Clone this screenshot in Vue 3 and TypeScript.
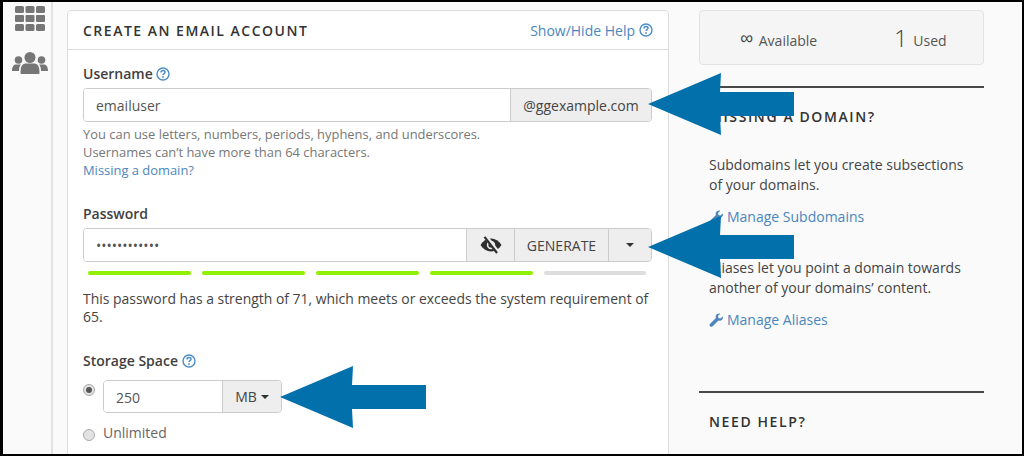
<script setup lang="ts">
const bars = ['on', 'on', 'on', 'on', 'off']
</script>

<template>
  <div class="frame">
    <aside class="rail">
      <svg class="grid-ico" width="30" height="26" viewBox="0 0 30 26" fill="#767676">
        <rect x="0" y="0" width="9" height="7" rx="1.5" /><rect x="10.5" y="0" width="9" height="7" rx="1.5" /><rect x="21" y="0" width="9" height="7" rx="1.5" />
        <rect x="0" y="9" width="9" height="7" rx="1" /><rect x="10.5" y="9" width="9" height="7" rx="1" /><rect x="21" y="9" width="9" height="7" rx="1" />
        <rect x="0" y="18" width="9" height="7" rx="1.5" /><rect x="10.5" y="18" width="9" height="7" rx="1.5" /><rect x="21" y="18" width="9" height="7" rx="1.5" />
      </svg>
      <svg class="people-ico" width="36" height="22" viewBox="0 0 36 22" fill="#767676">
        <circle cx="18" cy="5.5" r="5.5" />
        <circle cx="6.5" cy="8" r="3.8" />
        <circle cx="29.5" cy="8" r="3.8" />
        <path d="M0 19c0-4 1.500-6.500 4-6.500h5c-1.500 1.500-2 3.500-2 6.500z" />
        <path d="M36 19c0-4-1.500-6.500-4-6.500h-5c1.500 1.500 2 3.500 2 6.500z" />
        <path d="M8.500 21c0-6 1.500-9.500 5-9.500h9c3.500 0 5 3.500 5 9.500 0 .6-.5 1-1 1h-17c-.5 0-1-.4-1-1z" />
      </svg>
    </aside>

    <main class="content">
      <section class="card">
        <header class="card-head">
          <h2>CREATE AN EMAIL ACCOUNT</h2>
          <a class="link help-toggle">Show/Hide Help
            <svg class="q" viewBox="0 0 14 14" width="14" height="14"><circle cx="7" cy="7" r="6" fill="none" stroke="#4b8cc8" stroke-width="1.400" /><path d="M5 5.400c0-1.200.9-1.900 2-1.900s2 .7 2 1.700c0 1.500-2 1.500-2 2.900" fill="none" stroke="#4b8cc8" stroke-width="1.500" /><rect x="6.200" y="9.200" width="1.600" height="1.600" fill="#4b8cc8" /></svg>
          </a>
        </header>
        <div class="card-body">
          <div class="label">Username
            <svg class="q" viewBox="0 0 14 14" width="14" height="14"><circle cx="7" cy="7" r="6" fill="none" stroke="#4b8cc8" stroke-width="1.400" /><path d="M5 5.400c0-1.200.9-1.900 2-1.900s2 .7 2 1.700c0 1.500-2 1.500-2 2.900" fill="none" stroke="#4b8cc8" stroke-width="1.500" /><rect x="6.200" y="9.200" width="1.600" height="1.600" fill="#4b8cc8" /></svg>
          </div>
          <div class="input-group">
            <div class="field">emailuser</div>
            <div class="addon domain">@ggexample.com</div>
          </div>
          <p class="hint">You can use letters, numbers, periods, hyphens, and underscores.</p>
          <p class="hint">Usernames can’t have more than 64 characters.</p>
          <p class="hint"><a class="link">Missing a domain?</a></p>

          <div class="label pw-label">Password</div>
          <div class="input-group">
            <div class="field dots">••••••••••••</div>
            <div class="addon eye">
              <svg width="22" height="18" viewBox="0 0 22 18">
                <path d="M.5 9C3 4.800 6.800 2.600 11 2.600S19 4.800 21.500 9C19 13.200 15.200 15.400 11 15.400S3 13.200.5 9z" fill="#2e2e2e" />
                <circle cx="11" cy="9" r="4.200" fill="#eee" />
                <circle cx="11" cy="9" r="2.600" fill="#2e2e2e" />
                <path d="M5.800.5 18 16.500" stroke="#eee" stroke-width="4" />
                <path d="M4.500.8 17 17" stroke="#2e2e2e" stroke-width="2.200" />
              </svg>
            </div>
            <div class="addon gen">GENERATE</div>
            <div class="addon caret-cell"><span class="caret"></span></div>
          </div>
          <div class="strength">
            <span v-for="(b, i) in bars" :key="i" class="bar" :class="b"></span>
          </div>
          <p class="strength-text">This password has a strength of 71, which meets or exceeds the system requirement of 65.</p>

          <div class="label storage-label">Storage Space
            <svg class="q" viewBox="0 0 14 14" width="14" height="14"><circle cx="7" cy="7" r="6" fill="none" stroke="#4b8cc8" stroke-width="1.400" /><path d="M5 5.400c0-1.200.9-1.900 2-1.900s2 .7 2 1.700c0 1.500-2 1.500-2 2.900" fill="none" stroke="#4b8cc8" stroke-width="1.500" /><rect x="6.200" y="9.200" width="1.600" height="1.600" fill="#4b8cc8" /></svg>
          </div>
          <div class="radio-row storage-row">
            <span class="radio checked"></span>
            <div class="input-group small">
              <div class="field">250</div>
              <div class="addon mb">MB <span class="caret"></span></div>
            </div>
          </div>
          <div class="radio-row unlimited">
            <span class="radio"></span>
            <span class="unlimited-text">Unlimited</span>
          </div>
        </div>
      </section>

      <aside class="side">
        <div class="stats">
          <div class="stat inf"><span class="big inf-glyph">∞</span> Available</div>
          <div class="stat used"><span class="big">1</span> Used</div>
        </div>

        <div class="side-block first">
          <h3>MISSING A DOMAIN?</h3>
          <p>Subdomains let you create subsections of your domains.</p>
          <a class="link tool first-tool">
            <svg class="wrench" viewBox="0 0 14 14" width="14" height="14"><path fill="#4b86bd" d="M13.800 3.400c.3.900.2 2-.4 2.900-.9 1.300-2.500 1.800-3.900 1.300l-5.900 5.700c-.7.700-1.800.7-2.500 0s-.7-1.800 0-2.500l5.800-5.800c-.5-1.400 0-3 1.300-3.900.9-.6 2-.8 3-.4L9 3.100l.4 2 2 .4z" /></svg>
            Manage Subdomains
          </a>
          <p class="aliases">Aliases let you point a domain towards another of your domains’ content.</p>
          <a class="link tool second-tool">
            <svg class="wrench" viewBox="0 0 14 14" width="14" height="14"><path fill="#4b86bd" d="M13.800 3.400c.3.900.2 2-.4 2.900-.9 1.300-2.500 1.800-3.900 1.300l-5.900 5.700c-.7.700-1.800.7-2.500 0s-.7-1.800 0-2.500l5.800-5.800c-.5-1.400 0-3 1.300-3.900.9-.6 2-.8 3-.4L9 3.100l.4 2 2 .4z" /></svg>
            Manage Aliases
          </a>
        </div>

        <div class="side-block second">
          <h3>NEED HELP?</h3>
        </div>
      </aside>
    </main>

    <svg class="arrow a1" width="146" height="63" viewBox="0 0 146 63"><path d="M0 31 73 0 72 19H146V43H72L73 62z" fill="#0270ab" /></svg>
    <svg class="arrow a2" width="146" height="63" viewBox="0 0 146 63"><path d="M0 31 73 0 72 19H146V43H72L73 62z" fill="#0270ab" /></svg>
    <svg class="arrow a3" width="146" height="63" viewBox="0 0 146 63"><path d="M0 31 73 0 72 19H146V43H72L73 62z" fill="#0270ab" /></svg>
  </div>
</template>

<style>
html, body { margin: 0; padding: 0; background: #000; }
</style>

<style scoped>
.frame {
  position: relative;
  box-sizing: border-box;
  width: 1024px;
  height: 456px;
  overflow: hidden;
  display: flex;
  border-style: solid;
  border-color: #000;
  border-width: 2px 2px 2px 3px;
  background: #fafafa;
  font-family: "Open Sans", "Liberation Sans", sans-serif;
  font-size: 14px;
  color: #444;
}
.rail {
  box-sizing: border-box;
  width: 50px;
  flex: none;
  display: flex;
  flex-direction: column;
  border-right: 2px solid #e2e2e2;
  background: #fafafa;
}
.grid-ico { display: block; margin: 4px 0 0 12px; }
.people-ico { display: block; margin: 20px 0 0 9px; }
.content { display: flex; align-items: flex-start; padding-top: 8px; }
.card {
  box-sizing: border-box;
  width: 602px;
  height: 460px;
  margin-left: 14px;
  flex: none;
  background: #fff;
  border: 1px solid #ddd;
  border-radius: 4px;
}
.card-head {
  box-sizing: border-box;
  height: 39px;
  padding: 0 15px;
  display: flex;
  align-items: center;
  justify-content: space-between;
  border-bottom: 1px solid #ddd;
}
h2 {
  margin: 0;
  font-size: 14px;
  font-weight: 600;
  letter-spacing: 1.5px;
  color: #333;
}
.link { color: #4b86bd; }
.help-toggle { font-size: 14px; display: flex; align-items: center; gap: 4px; }
.q { vertical-align: -2px; }
.card-body { padding: 14px 15px 0; }
.label { font-weight: 600; line-height: 20px; color: #3f3f3f; }
.input-group {
  box-sizing: border-box;
  display: flex;
  height: 34px;
  width: 569px;
  margin-top: 4px;
  border: 1px solid #ccc;
  border-radius: 4px;
  overflow: hidden;
}
.field {
  flex: 1;
  min-width: 0;
  padding: 0 12px;
  line-height: 34px;
  color: #555;
  background: #fff;
}
.addon {
  box-sizing: border-box;
  flex: none;
  display: flex;
  align-items: center;
  justify-content: center;
  background: #eee;
  border-left: 1px solid #ccc;
  color: #444;
}
.domain { width: 141px; font-size: 14px; }
.eye { width: 48px; }
.gen { width: 94px; }
.caret-cell { width: 43px; }
.caret {
  display: inline-block;
  width: 0;
  height: 0;
  border-left: 4px solid transparent;
  border-right: 4px solid transparent;
  border-top: 4px solid #333;
}
.hint { margin: 0; font-size: 12.93px; line-height: 18px; color: #777; }
.input-group + .hint { margin-top: 3px; }
.pw-label { margin-top: 25px; }
.strength { display: flex; gap: 11px; margin: 9px 0 0 5px; width: 559px; }
.bar { width: 103px; height: 4px; border-radius: 2px; }
.bar.on { background: #90f000; }
.bar.off { background: #ddd; width: 102px; }
.strength-text { margin: 15px 0 0; width: 572px; line-height: 18px; color: #444; font-size: 13.95px; }
.storage-label { margin-top: 25px; }
.radio-row { display: flex; align-items: flex-start; margin-top: 4px; }
.storage-row { margin-top: 9px; }
.radio {
  box-sizing: border-box;
  width: 12px;
  height: 12px;
  flex: none;
  margin-top: 4px;
  border-radius: 50%;
  background: #e3e3e3;
  border: 1px solid #aaa;
  position: relative;
}
.radio.checked::after {
  content: "";
  display: block;
  width: 6px;
  height: 6px;
  margin: 2px;
  border-radius: 50%;
  background: #555;
}
.small { width: 179px; margin-top: 0; margin-left: 8px; height: 33px; }
.mb { width: 59px; gap: 4px; }
.unlimited { margin-top: 10px; align-items: center; }
.unlimited .radio { margin-top: 4px; }
.unlimited-text { margin-left: 8px; color: #666; line-height: 20px; }
.side { width: 285px; margin-left: 30px; flex: none; }
.stats {
  box-sizing: border-box;
  height: 55px;
  display: flex;
  gap: 16px;
  background: #f5f5f5;
  border: 1px solid #e3e3e3;
  border-radius: 4px;
  align-items: center;
  padding: 4px 0 0 16px;
}
.stat { flex: 1; text-align: center; line-height: 36px; white-space: nowrap; color: #555; }
.big { font-size: 24px; font-weight: 300; color: #444; vertical-align: -1px; margin-right: 2px; }
.inf-glyph { font-size: 18px; font-family: "DejaVu Sans", sans-serif; vertical-align: 2px; }
.side-block { margin-top: 21px; border-top: 2px solid #484848; padding: 0 10px; }
h3 { margin: 19px 0 0; font-size: 14px; font-weight: 600; letter-spacing: 1.6px; color: #333; line-height: 20px; }
.side-block p { margin: 28px 0 0; line-height: 20px; color: #444; }
.tool { display: flex; align-items: center; gap: 4px; margin-top: 11px; line-height: 20px; }
.first-tool { margin-top: 12px; }
.second-tool { margin-top: 12px; }
.side-block p.aliases { margin-top: 31px; }
.second { margin-top: 61px; }
.arrow { position: absolute; }
.a1 { left: 645px; top: 71px; }
.a2 { left: 645px; top: 214px; }
.a3 { left: 277px; top: 364px; }
</style>
